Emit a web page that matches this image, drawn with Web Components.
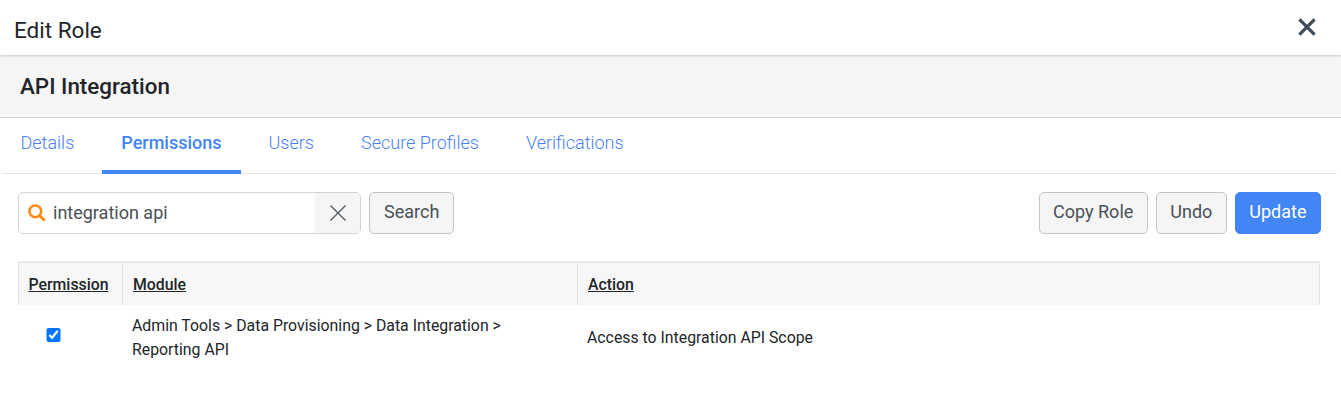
<!DOCTYPE html>
<html><head><meta charset="utf-8"><title>Edit Role</title>
<style>
html,body{margin:0;padding:0;background:#fff;font-family:Roboto,sans-serif;overflow:hidden}
</style></head><body>
<edit-role-dialog></edit-role-dialog>
<script>
function def(name, css, html){
  customElements.define(name, class extends HTMLElement{
    constructor(){super();const s=this.attachShadow({mode:'open'});s.innerHTML='<style>'+css+'</style>'+html;}
  });
}
def('dialog-header',`
:host{display:flex;align-items:center;justify-content:space-between;height:55px;padding:5px 22.6px 0 14px;box-sizing:border-box;box-shadow:0 1px 2px rgba(0,0,0,.18);position:relative;z-index:1;background:#fff}
.t{font-size:22.5px;line-height:26px;color:#212529;font-weight:400;margin-top:-1px}
svg{display:block;margin-top:-7px}
`,`<span class="t"><slot></slot></span>
<svg width="22" height="22" viewBox="0 0 22 22"><path d="M3.4 3.4 18.6 18.6M18.6 3.4 3.4 18.6" stroke="#3f4d5c" stroke-width="3.3" fill="none"/></svg>`);
def('role-band',`
:host{display:flex;align-items:center;height:63px;box-sizing:border-box;padding:1px 20px 2px;background:#f5f5f5;border-bottom:1px solid #d8d8d8;font-size:22.4px;font-weight:500;color:#212529}
`,`<slot></slot>`);
def('tab-bar',`
:host{display:flex;height:56px;box-sizing:border-box;margin:0 4px 0 2px;border-bottom:1px solid #e3e3e3}
`,`<slot></slot>`);
def('tab-item',`
:host{display:block;height:56px;box-sizing:border-box;padding:0 19.5px;margin-right:8px;font-size:18px;line-height:50px;font-weight:300;color:#4a7ffb}
:host(:first-child){margin-left:-1px}
:host([active]){font-weight:500;color:#4285f4;border-bottom:4px solid #4285f4;border-radius:3px 3px 0 0}
`,`<slot></slot>`);
def('search-box',`
:host{display:flex;align-items:stretch;width:343px;height:42px;box-sizing:border-box;border:1px solid #ced4da;border-radius:5px;overflow:hidden;background:#fff}
.ic{width:34px;display:flex;align-items:center;justify-content:flex-start;box-sizing:border-box;flex:none;padding-left:9px}
.txt{flex:1;font-size:18px;line-height:40px;color:#495057}
.x{width:45px;flex:none;background:#f5f5f5;display:flex;align-items:center;justify-content:center}
`,`<span class="ic"><svg width="18" height="18" viewBox="0 0 18 18"><circle cx="7.3" cy="7.3" r="5.9" fill="none" stroke="#fd8a0f" stroke-width="2.5"/><path d="M11.6 11.6 16.6 16.6" stroke="#fd8a0f" stroke-width="2.8" fill="none"/></svg></span>
<span class="txt"><slot></slot></span>
<span class="x"><svg width="18" height="18" viewBox="0 0 18 18"><path d="M1.5 1.5 16.5 16.5M16.5 1.5 1.5 16.5" stroke="#4b5560" stroke-width="1.3" fill="none"/></svg></span>`);
def('ui-button',`
:host{display:flex;align-items:center;justify-content:center;height:42px;box-sizing:border-box;padding:0 13.5px 2px;border:1px solid #c4c4c4;border-radius:5px;background:#f5f5f5;color:#495057;font-size:18px;line-height:38px}
:host([wide]){padding:0 14px 2px}
:host([primary]){background:#4285f4;border-color:#4285f4;color:#fff}
`,`<slot></slot>`);
def('tool-bar',`
:host{display:flex;align-items:center;height:42px;margin:18px 20px 0 18px;gap:8px}
.sp{flex:1}
`,`<slot name="left"></slot><span class="sp"></span><slot name="right"></slot>`);
def('perm-table',`
:host{display:block;margin:27px 21px 0 18px;font-size:15.84px;color:#212529}
.row{display:grid;grid-template-columns:104px 455px 1fr}
.head{height:44px;box-sizing:border-box;background:#f7f7f7;border-top:2px solid #e8e8e8;border-right:1px solid #e3e3e3;font-weight:500}
.head>div{border-left:1px solid #e3e3e3;padding:0 8px 0 9.5px;display:flex;align-items:center;height:42px;box-sizing:border-box;text-decoration:underline}
.head>div+div{padding-left:10px}
.body>div{padding:0 9px 0 10px;display:flex;align-items:center;height:65px;line-height:24px;box-sizing:border-box}
.body .c{justify-content:flex-start;padding:0 0 5px 28px}
.body .m{padding:9px 60px 0 10px;align-items:flex-start}
.body .a{padding-top:1px}
input{width:14.6px;height:14.6px;margin:0;display:block}
`,`<div class="row head"><div>Permission</div><div>Module</div><div>Action</div></div>
<div class="row body"><div class="c"><input type="checkbox" checked></div>
<div class="m">Admin Tools &gt; Data Provisioning &gt; Data Integration &gt; Reporting API</div>
<div class="a">Access to Integration API Scope</div></div>`);
def('edit-role-dialog',`
:host{display:block;width:1341px;height:401px;background:#fff}
`,`<dialog-header>Edit Role</dialog-header>
<role-band>API Integration</role-band>
<tab-bar><tab-item>Details</tab-item><tab-item active>Permissions</tab-item><tab-item>Users</tab-item><tab-item>Secure Profiles</tab-item><tab-item>Verifications</tab-item></tab-bar>
<tool-bar><search-box slot="left">integration api</search-box><ui-button slot="left" wide>Search</ui-button>
<ui-button slot="right">Copy Role</ui-button><ui-button slot="right">Undo</ui-button><ui-button slot="right" primary>Update</ui-button></tool-bar>
<perm-table></perm-table>`);
</script>
</body></html>
